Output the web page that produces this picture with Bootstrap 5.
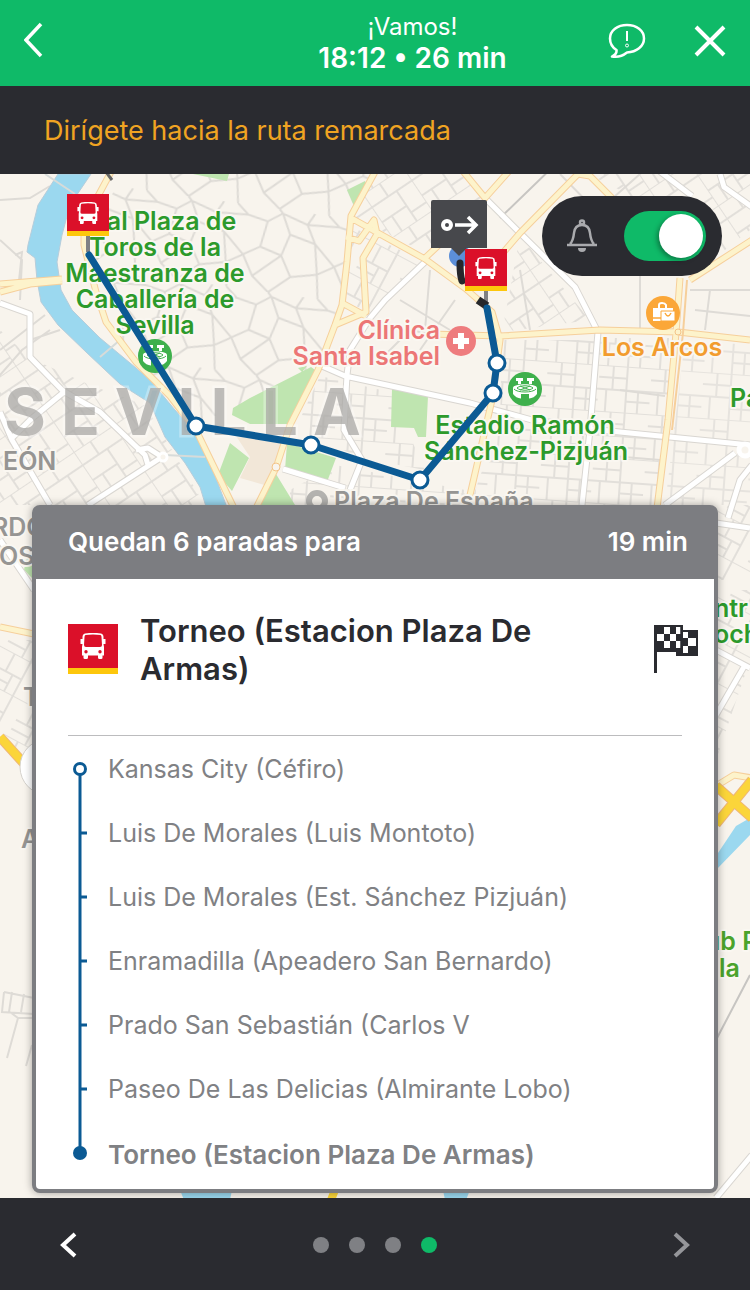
<!DOCTYPE html>
<html lang="es">
<head>
<meta charset="utf-8">
<meta name="viewport" content="width=device-width, initial-scale=1">
<title>Ruta en curso</title>
<link rel="stylesheet" href="https://cdn.jsdelivr.net/npm/bootstrap@5.3.0/dist/css/bootstrap.min.css">
<style>
  :root { --green:#0fba68; --dark:#2a2b30; --grey:#7c7d81; --blue:#0b5a94; --red:#db1029; }
  body { font-family: Inter, "Liberation Sans", sans-serif; background: var(--dark); }
  svg { display: block; }
  .icon-btn { border: 0; background: none; padding: 0; }
  .top-bar { background: var(--green); display: grid; grid-template-columns: 3fr 5fr 2fr; align-items: center; height: 86px; color: #fff; }
  .greet { font-size: 24px; line-height: 30px; }
  .eta { font-size: 28px; line-height: 32px; font-weight: 600; }
  .notice { background: var(--dark); color: #f0a422; font-size: 27px; line-height: 40px; padding: 25px 44px 23px; }
  .map-area { background: #f8f4ed; overflow: hidden; padding: 331px 32px 5px; }
  .map-art { position: absolute; inset: 0; width: 100%; height: 100%; }
  .lbl { font: 600 25px Inter, "Liberation Sans", sans-serif; paint-order: stroke; stroke: #faf7f1; stroke-width: 4px; stroke-linejoin: round; }
  .city { font: 700 64px Inter, "Liberation Sans", sans-serif; letter-spacing: 15px; fill: #a9a8a6; fill-opacity: .75; stroke: #fff; stroke-opacity: .3; paint-order: stroke; stroke-width: 5px; }
  .alert-pill { position: absolute; top: 22px; right: 28px; background: var(--dark); border-radius: 40px; height: 80px; padding: 0 16px 0 24px; gap: 26px; }
  .alert-pill .form-check-input { width: 82px; height: 50px; margin: 0; border: 0; border-radius: 25px; background: var(--green); position: relative; box-shadow: none; }
  .alert-pill .form-check-input::before { content: ""; position: absolute; right: 3px; top: 3px; width: 44px; height: 44px; border-radius: 50%; background: #fff; box-shadow: -2px 2px 5px rgba(0,0,0,.35); }
  .alert-pill .form-check-input:not(:checked)::before { right: auto; left: 3px; }
  .trip { border: 4px solid var(--grey); border-radius: 8px; box-shadow: 0 0 8px rgba(0,0,0,.35); }
  .trip-head { background: var(--grey); color: #fff; font-size: 26px; line-height: 30px; font-weight: 600; padding: 18px 26px 22px 32px; }
  .trip-dest { margin: 0 16px 0 32px; padding: 33px 0 47px; }
  .trip-dest h1 { font-size: 31px; line-height: 38px; font-weight: 600; color: var(--dark); padding: 0 48px 0 22px; }
  .trip-dest .mark-icon { margin-top: 12px; }
  .line-badge { width: 50px; height: 50px; background: var(--red); border-bottom: 6px solid #fdc70c; }
  .rule { height: 1px; background: #bcbcbe; margin: 0 32px; }
  .stops { padding: 1px 0 4px 32px; }
  .stops li { display: flex; align-items: center; height: 64px; font-size: 25px; color: #808184; gap: 16px; }
  .stops span { padding-top: 2px; }
  .stops li:last-child { font-weight: 600; font-size: 26px; }
  .bottom-bar { background: var(--dark); height: 92px; padding: 2px 58px 0; }
  .dots { gap: 20px; }
  .dot { width: 16px; height: 16px; border-radius: 50%; background: #7f8084; }
  .dot.on { background: var(--green); }
</style>
</head>
<body class="min-vh-100 d-flex flex-column">

<svg width="0" height="0" class="position-absolute" aria-hidden="true">
  <defs>
    <symbol id="bus" viewBox="0 0 26 26">
      <path fill="#fff" fill-rule="evenodd" d="M5 0.5Q13-.8 21 .5Q23.500 1 23.500 4V6H25.500V11H23.500L24 14V22.500H22.500V25Q22.500 26 21 26H19.500Q18 26 18 24.500V22.500H8V24.500Q8 26 6.500 26H5Q3.500 26 3.500 25V22.500H2V14L2.500 11H.5V6H2.500V4Q2.500 1 5 .5ZM5.500 2Q4.500 2.300 4.500 4L4 12Q4 14 6 14H20Q22 14 22 12L21.500 4Q21.500 2.300 20.500 2Q13 .8 5.500 2ZM6 17A1.700 1.700 0 1 0 6 20.400A1.700 1.700 0 1 0 6 17ZM20 17A1.700 1.700 0 1 0 20 20.400A1.700 1.700 0 1 0 20 17Z"/>
    </symbol>
    <symbol id="stadium" viewBox="-17 -17 34 34">
      <circle r="17" fill="#3eb04c"/>
      <path fill="#fff" d="M-9-11h7v3h-2v3h-3v-3h-2zM2-11h7v3h-2v3h-3v-3h-2z"/>
      <path fill="#fff" d="M-12-1C-12-6 12-6 12-1V5Q9 9 4 9.500V5H-4V9.500Q-9 9-12 5Z"/>
      <path fill="none" stroke="#3eb04c" d="M-11 0C-8 4 8 4 11 0M-8-1C-5-4 5-4 8-1C5 2-5 2-8-1M-5-3 5 1M5-3-5 1"/>
    </symbol>
  </defs>
</svg>

<header class="top-bar">
  <div><button class="icon-btn ms-4" aria-label="Atrás"><svg width="20" height="36" viewBox="1 -1 20 36"><path d="M18 1 3 17 18 33" fill="none" stroke="#fff" stroke-width="3.500"/></svg></button></div>
  <div class="text-center">
    <div class="greet">¡Vamos!</div>
    <div class="eta">18:12 • 26 min</div>
  </div>
  <div class="d-flex align-items-center justify-content-between ps-2 pe-4 pb-1">
    <button class="icon-btn" aria-label="Informar"><svg width="38" height="36" viewBox="0 0 38 36"><path d="M19 2C28.500 2 36 7.500 36 15.500S28.500 29 19 29.500C14 33.500 9 34.500 4 33.500C7 32 9 30 8.500 27C4.500 24.500 2 20.500 2 15.500C2 7.500 9.500 2 19 2Z" fill="none" stroke="#fff" stroke-width="2.500" stroke-linejoin="round"/><path d="M19 8V18" stroke="#fff" stroke-width="2"/><circle cx="19" cy="22.500" r="1.500" fill="none" stroke="#fff"/></svg></button>
    <button class="icon-btn" aria-label="Cerrar"><svg width="32" height="32" viewBox="0 0 32 32"><path d="M2 2 30 30M30 2 2 30" stroke="#fff" stroke-width="4"/></svg></button>
  </div>
</header>

<div class="notice" role="status">Dirígete hacia la ruta remarcada</div>

<main class="map-area position-relative flex-grow-1">
  <svg class="map-art" viewBox="0 174 750 1024" preserveAspectRatio="xMidYMin slice" role="img" aria-label="Mapa de Sevilla con la ruta">
    <defs>
      <pattern id="gridA" width="44" height="38" patternUnits="userSpaceOnUse" patternTransform="rotate(28)"><path d="M0 0H44M0 20H30M30 0V38M12 0V20M20 20V38M0 30H20" fill="none" stroke="#e2dfda" stroke-width="2"/></pattern>
      <pattern id="gridB" width="52" height="46" patternUnits="userSpaceOnUse" patternTransform="rotate(4)"><path d="M0 0H52M0 12H28M0 24H52M28 35H52M28 0V46M14 0V24M40 24V46M8 24V46" fill="none" stroke="#e2dfda" stroke-width="2"/></pattern>
      <pattern id="gridC" width="48" height="52" patternUnits="userSpaceOnUse" patternTransform="rotate(-34)"><path d="M0 0H48M0 16H48M0 34H30M20 0V16M0 0V52M30 16V52M12 34V52M30 42H48" fill="none" stroke="#e2dfda" stroke-width="2"/></pattern>
      <pattern id="oldTown" width="92" height="84" patternUnits="userSpaceOnUse" patternTransform="rotate(8)"><path d="M0 10 20 14 34 4 60 12 92 10M20 14 16 40 0 50M16 40 38 46 44 24 34 4M44 24 70 30 60 12M70 30 92 50M38 46 50 66 30 84M50 66 76 60 70 30M76 60 92 50M0 50 12 70 30 84M12 70 38 46M76 60 80 84M60 12 66 0M30 0 34 4M80 0 92 10" fill="none" stroke="#dedbd6" stroke-width="2"/></pattern>
    </defs>
    <rect y="174" width="750" height="1024" fill="#f8f4ed"/>

    <!-- street fabric -->
    <path fill="url(#oldTown)" d="M122 174H370L347 220V300L318 370L232 410L190 425L135 360L90 290V240Z"/>
    <path fill="url(#gridC)" d="M0 330 30 358 90 385 145 405 205 505H0Z"/>
    <path fill="url(#gridC)" d="M378 174H460L485 198L430 255L350 215Z"/>
    <path fill="url(#gridA)" d="M348 225 425 262 370 312 342 300Z"/>
    <path fill="url(#gridC)" d="M520 236 590 320 502 332ZM588 174H750V230L700 270 620 190Z"/>
    <path fill="url(#gridB)" d="M502 340H600L583 505H470L500 420ZM600 338H672L660 505H584ZM320 376 390 392 425 470 362 458 295 430ZM290 490 335 465 465 490V505H290Z"/>
    <path fill="url(#gridB)" d="M685 340 750 345V505H665Z" opacity=".8"/>
    <path fill="url(#gridA)" d="M0 640H32V765L0 730ZM716 590H750V660L716 760ZM716 505H750V580H716Z"/>
    <path d="M0 200 30 198 50 186M0 240 22 260 20 300M15 255 22 252 18 290M0 375 22 350 50 330M30 340 60 330M0 350 45 315M380 360 410 330 435 335M400 300 450 330M430 270 425 330M455 300 420 350M520 270 530 330M560 174 600 215M605 205 640 174M640 276V330M690 290H750M695 310 750 316M710 290 705 330M620 390 665 396M600 455 660 460M4 992 34 998M12 992 9 1012M24 994 21 1012M4 992 2 1012 34 1014M10 1012 18 1018H34M18 1018 7 1058M32 1045 26 1066" fill="none" stroke="#dedbd6" stroke-width="2"/>
    <path d="M500 218 560 160M750 975 716 1040" stroke="#c7c5c2" stroke-width="2"/>

    <!-- parks -->
    <g fill="#bfe5b0">
      <path d="M347 190 365 181 369 190 354 206ZM193 174H229L227 181ZM233 408 250 398 311 367 318 372 292 424 250 424 232 415ZM392 389 428 396 426 437 418 437 414 428 391 427ZM287 443 336 458 327 482 285 470ZM276 474 295 505H260ZM230 443 249 458 232 491 218 475ZM26 560 32 556V578L24 570ZM298 368 307 366 302 372Z"/>
    </g>
    <path fill="#f2e7d8" d="M236 436 285 444 279 464 268 486 240 478 250 457Z"/>

    <!-- river -->
    <path fill="#9bd8ef" stroke="#b6cddb" stroke-width="1" d="M58 174 38 205 28 245 27 252 35 258 37 280 41 302 58 325 86 352 120 384 150 403 165 437 185 463 200 487 207 510H228L212 468 196 434 175 410 150 380 136 368 100 338 72 310 61 290 57 262 62 235 70 205 91 174Z"/>
    <path fill="#9bd8ef" d="M716 856V870L750 835V818L736 826ZM180 1190H232L230 1200H184ZM443 1190H470L466 1200H445Z"/>
    <path d="M205 457 165 455M100 357 120 340M45 174 75 194" stroke="#d7dbd9" stroke-width="2"/>

    <!-- white avenues: casing, then surface -->
    <g fill="none" stroke-linejoin="round">
      <g stroke="#d9d6d1" stroke-width="7">
        <path id="avenues" d="M0 303 30 314V357L63 391 100 412 145 455 148 465M64 392 30 420 10 440M162 457 148 448 136 450M162 457 88 505M0 412 12 440 50 505M0 540 34 590M425 262 385 300 370 318 350 350 347 375 344 430 362 460 350 490M322 366 345 376 470 403 550 425 750 445M283 469 345 488M485 198 520 233 575 287 598 332 590 430 582 505M720 174 724 187 752 207M658 170 692 196M665 505 735 453M752 465 740 480 728 518M716 523 750 528M716 715 745 665M716 650 750 668M716 1198 752 1155"/>
      </g>
      <path stroke="#fff" stroke-width="5" d="M0 303 30 314V357L63 391 100 412 145 455 148 465M64 392 30 420 10 440M162 457 148 448 136 450M162 457 88 505M0 412 12 440 50 505M0 540 34 590M425 262 385 300 370 318 350 350 347 375 344 430 362 460 350 490M322 366 345 376 470 403 550 425 750 445M283 469 345 488M485 198 520 233 575 287 598 332 590 430 582 505M720 174 724 187 752 207M658 170 692 196M665 505 735 453M752 465 740 480 728 518M716 523 750 528M716 715 745 665M716 650 750 668M716 1198 752 1155"/>
      <circle cx="163" cy="457" r="4" fill="#f8f4ed" stroke="#fff" stroke-width="3"/>
      <circle cx="745" cy="450" r="6" fill="#f8f4ed" stroke="#fff" stroke-width="5"/>
    </g>

    <!-- yellow main roads: casing, then surface -->
    <g fill="none" stroke-linejoin="round">
      <path stroke="#f6cf9b" stroke-width="7" d="M112 170 84 222V245L96 292 106 322 136 362 170 396 196 430 234 508M0 292 30 284 62 281M0 284 62 279M376 170 351 216 347 262 342 305 335 325 318 370 290 425 276 468 256 508M351 218 425 259 466 289 492 312 500 340 492 400 467 508M346 237 359 241 374 220 377 234 363 258 366 312 335 325M342 303 366 316M425 258 440 244M462 170 485 198 510 170M495 262 520 233 578 174 590 176 612 198M430 334 500 336 600 330 678 332 750 340M680 278 676 333 668 420 657 508M752 240 690 280M0 627 34 634M716 786 734 775 752 778"/>
      <path stroke="#fdf3cb" stroke-width="5" d="M112 170 84 222V245L96 292 106 322 136 362 170 396 196 430 234 508M0 292 30 284 62 281M0 284 62 279M376 170 351 216 347 262 342 305 335 325 318 370 290 425 276 468 256 508M351 218 425 259 466 289 492 312 500 340 492 400 467 508M346 237 359 241 374 220 377 234 363 258 366 312 335 325M342 303 366 316M425 258 440 244M462 170 485 198 510 170M495 262 520 233 578 174 590 176 612 198M430 334 500 336 600 330 678 332 750 340M680 278 676 333 668 420 657 508M752 240 690 280M0 627 34 634M716 786 734 775 752 778"/>
      <path stroke="#f6cf9b" stroke-width="2" d="M687 280 683 333 672 430"/>
      <path stroke="#efb676" stroke-width="10" d="M0 737 28 768M716 786 752 818M752 780 716 824"/>
      <path stroke="#fbd53a" stroke-width="8" d="M0 737 28 768M716 786 752 818M752 780 716 824M335 1190 331 1200"/>
      <circle cx="678" cy="332" r="3" stroke="#f3c488" fill="#fdf3cb"/><circle cx="276" cy="467" r="4" stroke="#f3c488" fill="#f8f4ed"/>
    </g>
    <path d="M106 172 112 180" stroke="#666" stroke-width="3"/>
    <circle cx="48" cy="767" r="28" fill="#fff" stroke="#d5d2cd"/>

    <!-- place names -->
    <text class="city" x="4" y="435">SEVILLA</text>
    <g class="lbl" fill="#2c9a2b" text-anchor="middle">
      <text x="156" y="230">Real Plaza de</text>
      <text x="155" y="256">Toros de la</text>
      <text x="155" y="282">Maestranza de</text>
      <text x="155" y="308">Caballería de</text>
      <text x="155" y="334">Sevilla</text>
      <text x="525" y="434">Estadio Ramón</text>
      <text x="526" y="460">Sánchez-Pizjuán</text>
    </g>
    <g class="lbl" fill="#2c9a2b">
      <text x="730" y="407">Pa</text><text x="714" y="617">ntr</text><text x="714" y="643">och</text>
      <text x="705" y="950" fill="#4ba32c">ub P</text><text x="719" y="977" fill="#4ba32c">la</text>
    </g>
    <g class="lbl" fill="#ec7676" text-anchor="end">
      <text x="440" y="339">Clínica</text><text x="440" y="365">Santa Isabel</text>
    </g>
    <text class="lbl" fill="#f29c2e" text-anchor="middle" x="662" y="356">Los Arcos</text>
    <g class="lbl" fill="#969593">
      <text x="3" y="470">EÓN</text><text x="-8" y="536">RDO</text><text x="-1" y="565">OS</text>
      <text x="23" y="706">T</text><text x="21" y="848">A</text><text x="334" y="510">Plaza De España</text>
    </g>
    <circle cx="317" cy="501" r="8" fill="none" stroke="#b3b2af" stroke-width="6"/>

    <!-- place markers -->
    <use href="#stadium" x="138" y="339" width="34" height="34"/>
    <use href="#stadium" x="508" y="372" width="34" height="34"/>
    <circle cx="461" cy="341" r="15" fill="#ee7c7e"/><path d="M461 333V349M453 341H469" stroke="#fff" stroke-width="6"/>
    <circle cx="663" cy="313" r="17" fill="#fba738"/>
    <path d="M653 308H673V321H653Z" fill="#fff"/><path d="M659 308V305Q659 303 662 303T666 305V308" fill="none" stroke="#fff" stroke-width="2"/><path d="M661 311H675V321H661Z" fill="#fff" stroke="#fba738"/><path d="M665 313Q668 319 671 313M653 318H661" fill="none" stroke="#fba738" stroke-width="1.500"/>

    <!-- route -->
    <path d="M88 236V252M486 290V306" stroke="#808184" stroke-width="4"/>
    <circle cx="460" cy="256" r="11" fill="#5c8fd8"/>
    <path d="M460 263Q460 275 462 281" fill="none" stroke="#26272b" stroke-width="7" stroke-linecap="round"/>
    <path d="M478 300 487 306" stroke="#26272b" stroke-width="8"/>
    <path d="M89 255 196 426 311 445 420 480 493 393 497 363 487 308" fill="none" stroke="#0b5a94" stroke-width="7" stroke-linejoin="round" stroke-linecap="round"/>
    <g fill="#fff" stroke="#0b5a94" stroke-width="3">
      <circle cx="196" cy="426" r="8"/><circle cx="311" cy="445" r="8"/><circle cx="420" cy="480" r="8"/><circle cx="493" cy="393" r="8"/><circle cx="497" cy="363" r="8"/>
    </g>
    <path d="M433 200H485Q487 200 487 202V248H467L459 256 451 248H431V202Q431 200 433 200Z" fill="#47484c"/>
    <circle cx="447" cy="225" r="4" fill="none" stroke="#fff" stroke-width="4"/><path d="M455 225H475M468 217 476 225 468 233" fill="none" stroke="#fff" stroke-width="3.500"/>
    <path d="M67 194H109V231H67ZM465 249H507V286H465Z" fill="#db1029"/><path d="M67 231H109V236H67ZM465 286H507V291H465Z" fill="#fdc70c"/>
    <use href="#bus" x="77" y="202" width="22" height="22"/><use href="#bus" x="475" y="257" width="22" height="22"/>
  </svg>

  <div class="alert-pill d-flex align-items-center">
    <svg width="32" height="34" viewBox="0 0 32 34"><g fill="none" stroke="#aaabae" stroke-width="2.500"><circle cx="16" cy="3.500" r="2"/><path d="M1 26H31M4 25C7 22 7.500 19 8 14C8.500 9 11 6 16 6S23.500 9 24 14C24.500 19 25 22 28 25"/></g><path d="M12 29H20Q20 33 16 33T12 29Z" fill="#aaabae"/></svg>
    <input class="form-check-input" type="checkbox" role="switch" checked aria-label="Avisos">
  </div>

  <section class="trip position-relative bg-white">
    <div class="trip-head d-flex justify-content-between"><span>Quedan 6 paradas para</span><span>19 min</span></div>
    <div class="trip-dest d-flex">
      <div class="line-badge mark-icon d-flex flex-shrink-0 align-items-center justify-content-center align-self-start"><svg width="26" height="26"><use href="#bus"/></svg></div>
      <h1 class="flex-grow-1 mb-0">Torneo (Estacion Plaza De Armas)</h1>
      <svg class="mark-icon flex-shrink-0" width="44" height="50" viewBox="0 0 44 50">
        <path fill="#2a2b30" d="M0 1H29V6H44V32H22V28H3V49H0Z"/>
        <path fill="#fff" d="M10 3H16V10H10ZM22 3H27V10H22ZM3 10H10V17H3ZM16 10H22V17H16ZM10 17H16V24H10ZM22 17H27V24H22ZM29 8H34V14H29ZM34 14H42V22H34ZM29 22H34V29H29Z"/>
        <path d="M27 3V26" stroke="#2a2b30" stroke-width="1.500"/>
      </svg>
    </div>
    <div class="rule"></div>
    <ol class="stops list-unstyled mb-0">
      <li><svg width="24" height="64"><path d="M12 38V64" stroke="#0b5a94" stroke-width="3"/><circle cx="12" cy="32" r="5.500" fill="#fff" stroke="#0b5a94" stroke-width="3"/></svg><span>Kansas City (Céfiro)</span></li>
      <li><svg width="24" height="64"><path d="M12 0V64M12 32H19" stroke="#0b5a94" stroke-width="3"/></svg><span>Luis De Morales (Luis Montoto)</span></li>
      <li><svg width="24" height="64"><path d="M12 0V64M12 32H19" stroke="#0b5a94" stroke-width="3"/></svg><span>Luis De Morales (Est. Sánchez Pizjuán)</span></li>
      <li><svg width="24" height="64"><path d="M12 0V64M12 32H19" stroke="#0b5a94" stroke-width="3"/></svg><span>Enramadilla (Apeadero San Bernardo)</span></li>
      <li><svg width="24" height="64"><path d="M12 0V64M12 32H19" stroke="#0b5a94" stroke-width="3"/></svg><span>Prado San Sebastián (Carlos V</span></li>
      <li><svg width="24" height="64"><path d="M12 0V64M12 32H19" stroke="#0b5a94" stroke-width="3"/></svg><span>Paseo De Las Delicias (Almirante Lobo)</span></li>
      <li><svg width="24" height="64"><path d="M12 0V32" stroke="#0b5a94" stroke-width="3"/><circle cx="12" cy="32" r="7" fill="#0b5a94"/></svg><span>Torneo (Estacion Plaza De Armas)</span></li>
    </ol>
  </section>
</main>

<footer class="bottom-bar d-flex align-items-center justify-content-between">
  <button class="icon-btn" aria-label="Paso anterior"><svg width="20" height="26" viewBox="0 0 20 26"><path d="M17 2 5 13 17 24" fill="none" stroke="#fff" stroke-width="4"/></svg></button>
  <div class="dots d-flex"><span class="dot"></span><span class="dot"></span><span class="dot"></span><span class="dot on"></span></div>
  <button class="icon-btn" aria-label="Paso siguiente"><svg width="20" height="26" viewBox="0 0 20 26"><path d="M3 2 15 13 3 24" fill="none" stroke="#95969a" stroke-width="4"/></svg></button>
</footer>
<script src="https://cdn.jsdelivr.net/npm/bootstrap@5.3.0/dist/js/bootstrap.bundle.min.js"></script>
</body>
</html>
